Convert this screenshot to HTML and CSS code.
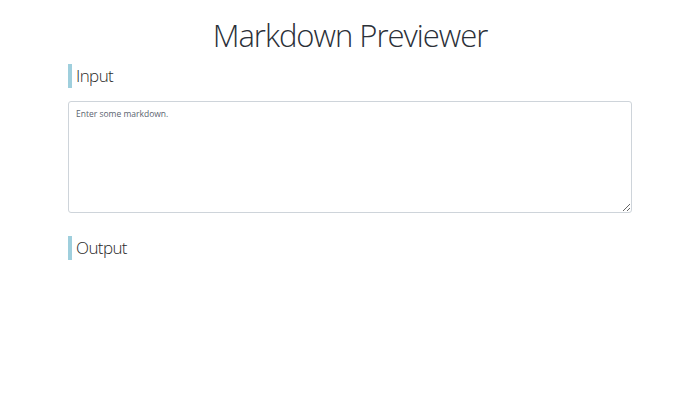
FILE: index.html
```html
<!DOCTYPE html>
<html>
<head>
<meta charset="utf-8">
<link rel="stylesheet" href="styles.css">
</head>
<body>
<div class="page">
  <h1 class="title">Markdown Previewer</h1>
  <h2 class="section-head">Input</h2>
  <textarea class="editor" placeholder="Enter some markdown."></textarea>
  <h2 class="section-head output-head">Output</h2>
  <div class="preview"></div>
</div>
</body>
</html>
```
FILE: styles.css
```css
html, body {
  margin: 0;
  padding: 0;
  background: #fff;
}
body {
  font-family: "Open Sans", "Noto Sans", sans-serif;
  color: #212529;
}
.page {
  padding: 0 68px;
  display: flex;
  flex-direction: column;
}
.title {
  margin: 14px 0 0;
  font-family: "Open Sans", sans-serif;
  font-size: 31px;
  font-weight: 300;
  text-align: center;
  line-height: 42px;
  color: #2b3038;
  letter-spacing: -1px;
}
.section-head {
  margin: 8px 0 0;
  font-size: 17px;
  font-weight: 300;
  line-height: 24px;
  border-left: 4px solid #9fcfdd;
  padding-left: 4px;
  color: #2a2a2a;
  letter-spacing: -0.6px;
}
.editor {
  margin-top: 13px;
  height: 112px;
  box-sizing: border-box;
  border: 1px solid #ced4da;
  border-radius: 3px;
  padding: 6px 7px;
  font-family: "Open Sans", "Noto Sans", sans-serif;
  font-size: 8.5px;
  color: #495057;
  resize: vertical;
}
.editor::placeholder {
  color: #5b6470;
}
.output-head {
  margin-top: 23px;
}
```
